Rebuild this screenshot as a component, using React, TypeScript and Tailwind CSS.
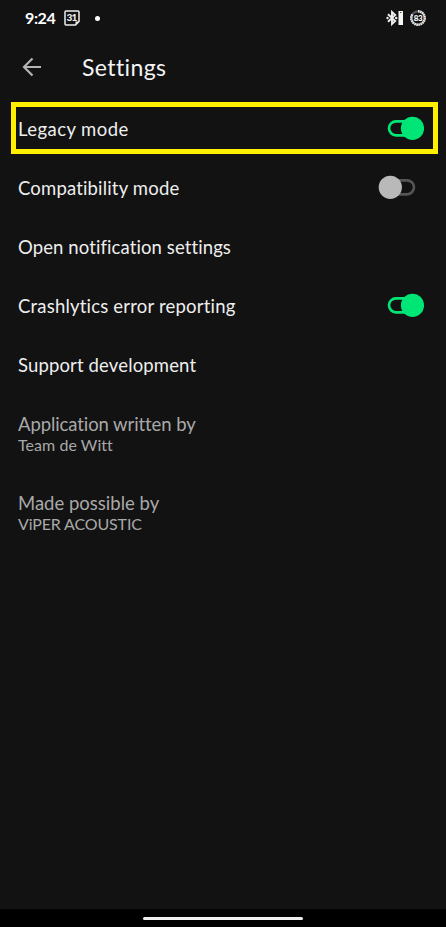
type SettingRow = {
  label: string;
  tracking: string;
  enabled?: boolean;
  highlighted?: boolean;
};

const rows: SettingRow[] = [
  { label: "Legacy mode", tracking: "tracking-[0.43px]", enabled: true, highlighted: true },
  { label: "Compatibility mode", tracking: "tracking-[0.17px]", enabled: false },
  { label: "Open notification settings", tracking: "tracking-[0.1px]" },
  { label: "Crashlytics error reporting", tracking: "tracking-[0.2px]", enabled: true },
  { label: "Support development", tracking: "tracking-[0.14px]" },
];

const StatusBar = () => {
  return (
    <header className="flex h-9 items-center pl-[25px] pr-5 text-white">
      <span className="w-8 whitespace-nowrap text-[16px] font-bold leading-none tracking-[-0.4px]">
        9:24
      </span>
      <svg className="ml-[7px] h-4 w-4" viewBox="0 0 16 16" fill="none">
        <path d="M2 1h12a1 1 0 0 1 1 1v9.5L11.500 15H2a1 1 0 0 1-1-1V2a1 1 0 0 1 1-1z" stroke="#eee" strokeWidth="1.5" />
        <path d="M15 11.5h-3.500V15z" fill="#eee" />
        <text x="7.600" y="11.400" textAnchor="middle" fontSize="10" fontWeight="900" letterSpacing="-.8" fill="#eee">31</text>
      </svg>
      <span className="ml-[15px] h-[5px] w-[5px] rounded-full bg-white" />
      <svg className="ml-auto h-4 w-[18px]" viewBox="0 0 18 16" fill="none">
        <path d="M2 4.200 9.200 11 6 14V2l3.200 3L2 11.800" stroke="#eee" strokeWidth="1.9" />
        <circle cx="1.500" cy="8" r="1.200" fill="#eee" />
        <circle cx="10.200" cy="8" r="1.200" fill="#eee" />
        <path d="M12.500 1h4.500v14h-4.500z" fill="#f5f5f5" />
        <path d="M14 2.500h1.500" stroke="#555" />
      </svg>
      <svg className="ml-[6px] h-4 w-4" viewBox="0 0 16 16" fill="none">
        <circle cx="8" cy="8" r="6.700" stroke="#555" strokeWidth="2.200" />
        <circle
          cx="8"
          cy="8"
          r="6.700"
          stroke="#e8e8e8"
          strokeWidth="2.400"
          strokeDasharray="1.6 .5 1.6 .5 1.6 .5 1.6 .5 1.6 .5 1.6 .5 1.6 .5 1.6 .5 1.6 .5 1.6 .5 1.6 .5 1.6 .5 1.6 .5 1.6 .5 1.6 .5 1.6 .5 1.6 10"
          transform="rotate(-90 8 8)"
        />
        <text x="8" y="11" textAnchor="middle" fontSize="8" fontWeight="900" letterSpacing="-.3" fill="#fff">83</text>
      </svg>
    </header>
  );
};

const Toggle = ({ enabled }: { enabled: boolean }) => {
  return (
    <svg className="h-6 w-[46px]" viewBox="0 0 46 24" fill="none" role="switch" aria-checked={enabled}>
      <rect x="11" y="5.3" width="25" height="14" rx="7" stroke={enabled ? "#00e676" : "#555555"} strokeWidth="2.7" />
      <circle cx={enabled ? 34.5 : 12.3} cy="12.3" r="11.6" fill={enabled ? "#00e676" : "#b9b9b9"} />
    </svg>
  );
};

const Row = ({ label, tracking, enabled, highlighted }: SettingRow) => {
  return (
    <li className="flex h-[59px] items-center pl-[11px]">
      <div
        className={`flex h-[52px] w-[427px] shrink-0 items-center justify-between border-[5px] pl-[2px] pr-[9px] ${
          highlighted ? "border-[#fff000]" : "border-transparent"
        }`}
      >
        <span className={`whitespace-nowrap pt-[2px] text-[18.5px] leading-6 text-[#eeeeee] ${tracking}`}>{label}</span>
        {enabled !== undefined && <Toggle enabled={enabled} />}
      </div>
    </li>
  );
};

type CreditProps = {
  title: string;
  titleTracking: string;
  name: string;
  nameTracking: string;
};

const Credit = ({ title, titleTracking, name, nameTracking }: CreditProps) => {
  return (
    <li className="flex h-[79px] flex-col justify-center pl-[18px] pt-[2px] text-[#a9a9a9]">
      <span className={`text-[18.5px] leading-[22px] ${titleTracking}`}>{title}</span>
      <span className={`text-[16px] leading-5 ${nameTracking}`}>{name}</span>
    </li>
  );
};

const App = () => {
  return (
    <div className="flex h-[927px] w-full flex-col overflow-hidden bg-[#121212] font-[Lato,sans-serif]">
      <StatusBar />
      <div className="flex h-[62.5px] items-center pl-[22px]">
        <svg className="h-5 w-5" viewBox="0 0 20 20" fill="none" stroke="#b4b4b4" strokeWidth="2.2">
          <path d="M19 10H2M10.5 1.5 2 10l8.5 8.5" />
        </svg>
        <h1 className="ml-10 text-[23px] leading-7 tracking-[0.4px] text-[#f4f4f4]">Settings</h1>
      </div>
      <ul>
        {rows.map((row) => (
          <Row key={row.label} {...row} />
        ))}
        <Credit
          title="Application written by"
          titleTracking="tracking-[-0.09px]"
          name="Team de Witt"
          nameTracking="tracking-[0.05px]"
        />
        <Credit
          title="Made possible by"
          titleTracking="tracking-normal"
          name="ViPER ACOUSTIC"
          nameTracking="tracking-[-0.15px]"
        />
      </ul>
      <footer className="mt-auto flex h-[18px] justify-center bg-black pt-2">
        <div className="h-[3px] w-[160px] rounded-full bg-[#eeeeee]" />
      </footer>
    </div>
  );
};

export default App;
